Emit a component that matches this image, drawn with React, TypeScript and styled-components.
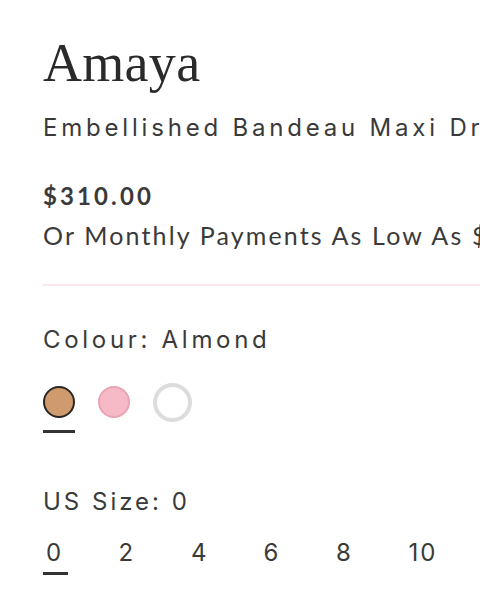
import React from "react";
import styled, { createGlobalStyle } from "styled-components";

const Global = createGlobalStyle`
  html, body {
    margin: 0;
    padding: 0;
    background: #ffffff;
    overflow: hidden;
  }
  body {
    font-family: Inter, "Noto Sans", sans-serif;
    color: #3a3a3a;
  }
`;

const Page = styled.main`
  width: 480px;
  height: 599px;
  box-sizing: border-box;
  padding: 35px 0 0 43px;
  overflow: hidden;
  white-space: nowrap;
`;

const Brand = styled.h1`
  margin: 0;
  font-family: "Liberation Serif", "DejaVu Serif", serif;
  font-weight: 400;
  font-size: 54px;
  line-height: 56px;
  color: #2a2a2a;
  letter-spacing: 0.3px;
`;

const Line = styled.div<{ $top: number; $spacing?: number }>`
  margin-top: ${(p) => p.$top}px;
  font-size: 24px;
  line-height: 28px;
  letter-spacing: ${(p) => p.$spacing ?? 3}px;
`;

/* Price and instalment copy use a humanist face */
const PriceLine = styled.div<{ $top: number; $size: number; $weight: number; $spacing: number }>`
  margin-top: ${(p) => p.$top}px;
  font-family: Lato, "Noto Sans", sans-serif;
  font-size: ${(p) => p.$size}px;
  line-height: 28px;
  font-weight: ${(p) => p.$weight};
  letter-spacing: ${(p) => p.$spacing}px;
`;

const Divider = styled.hr`
  margin: 35px 0 0;
  border: 0;
  height: 2px;
  background: #fbe6ec;
`;

const SwatchRow = styled.div`
  margin-top: 28px;
  display: flex;
  align-items: flex-start;
  gap: 23px;
`;

const SwatchItem = styled.div`
  display: flex;
  flex-direction: column;
  align-items: center;
  gap: 8px;
`;

const SwatchHolder = styled.div`
  height: 40px;
  display: flex;
  align-items: center;
`;

const Swatch = styled.span<{ $fill: string; $ring: string; $ringWidth: number; $size: number }>`
  display: block;
  box-sizing: border-box;
  width: ${(p) => p.$size}px;
  height: ${(p) => p.$size}px;
  border-radius: 50%;
  background: ${(p) => p.$fill};
  border: ${(p) => p.$ringWidth}px solid ${(p) => p.$ring};
`;

const Underline = styled.span<{ $on: boolean; $width: number }>`
  display: block;
  width: ${(p) => p.$width}px;
  height: 3px;
  background: ${(p) => (p.$on ? "#333333" : "transparent")};
`;

const SizeRow = styled.div`
  margin-top: 23px;
  display: flex;
`;

const SizeItem = styled.div`
  width: 72.5px;
  display: flex;
  flex-direction: column;
  align-items: flex-start;
  gap: 5px;
`;

const SizeText = styled.span`
  font-size: 24px;
  line-height: 28px;
  letter-spacing: 2px;
  padding-left: 3px;
`;

const swatches = [
  { name: "Almond", fill: "#cf9b6e", ring: "#2b2623", ringWidth: 2, size: 32 },
  { name: "Pink", fill: "#f6b9c6", ring: "#e9a3b2", ringWidth: 2, size: 32 },
  { name: "White", fill: "#ffffff", ring: "#dcdcdc", ringWidth: 4, size: 39 },
];

const sizes = ["0", "2", "4", "6", "8", "10"];

export default function App() {
  return (
    <>
      <Global />
      <Page>
        <Brand>Amaya</Brand>
        <Line $top={23} $spacing={3.8}>Embellished Bandeau Maxi Dress</Line>
        <PriceLine $top={40} $size={24} $weight={700} $spacing={3.1}>$310.00</PriceLine>
        <PriceLine $top={11} $size={25} $weight={400} $spacing={2.15}>
          Or Monthly Payments As Low As $28
        </PriceLine>
        <Divider />
        <Line $top={40} $spacing={3.7}>Colour: Almond</Line>
        <SwatchRow>
          {swatches.map((s, i) => (
            <SwatchItem key={s.name}>
              <SwatchHolder>
                <Swatch $fill={s.fill} $ring={s.ring} $ringWidth={s.ringWidth} $size={s.size} />
              </SwatchHolder>
              <Underline $on={i === 0} $width={32} />
            </SwatchItem>
          ))}
        </SwatchRow>
        <Line $top={55}>US Size: 0</Line>
        <SizeRow>
          {sizes.map((s, i) => (
            <SizeItem key={s}>
              <SizeText>{s}</SizeText>
              <Underline $on={i === 0} $width={25} />
            </SizeItem>
          ))}
        </SizeRow>
      </Page>
    </>
  );
}
